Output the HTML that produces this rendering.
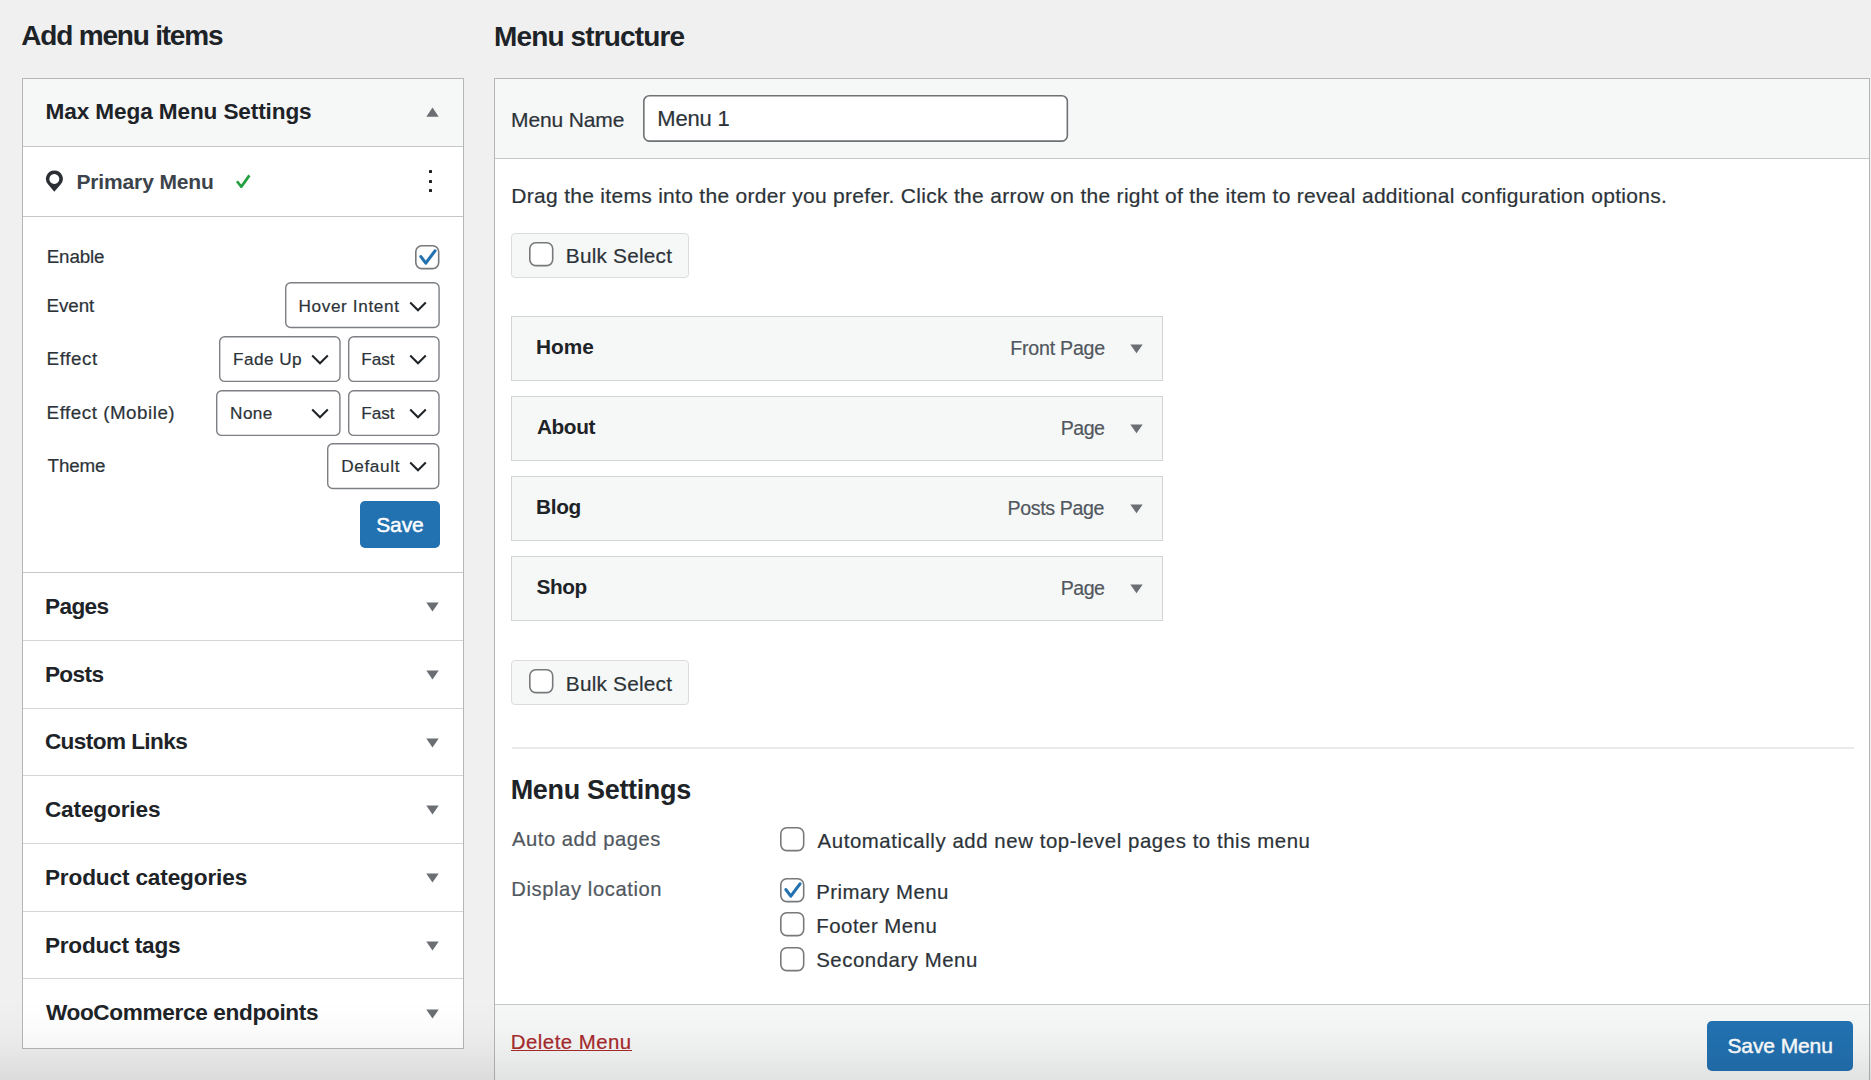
<!DOCTYPE html>
<html><head><meta charset="utf-8"><style>
html,body{margin:0;padding:0;}
body{width:1871px;height:1080px;overflow:hidden;position:relative;background:#f0f0f1;font-family:"Liberation Sans",sans-serif;}
div{white-space:pre;}
</style></head><body>
<div style="position:absolute;left:22.00px;top:78.00px;width:441.50px;height:970.50px;box-sizing:border-box;background:#fff;border:1px solid #b4b6b9;"></div>
<div style="position:absolute;left:23.00px;top:79.00px;width:439.50px;height:67.00px;box-sizing:border-box;background:#f6f7f7;"></div>
<div style="position:absolute;left:23.00px;top:145.50px;width:439.50px;height:1.00px;box-sizing:border-box;background:#c6c7c9;"></div>
<div style="position:absolute;left:23.00px;top:216.00px;width:439.50px;height:1.00px;box-sizing:border-box;background:#c6c7c9;"></div>
<div style="position:absolute;left:23.00px;top:572.20px;width:439.50px;height:1.00px;box-sizing:border-box;background:#c6c7c9;"></div>
<div style="position:absolute;left:23.00px;top:639.90px;width:439.50px;height:1.00px;box-sizing:border-box;background:#d4d5d7;"></div>
<div style="position:absolute;left:23.00px;top:707.60px;width:439.50px;height:1.00px;box-sizing:border-box;background:#d4d5d7;"></div>
<div style="position:absolute;left:23.00px;top:775.30px;width:439.50px;height:1.00px;box-sizing:border-box;background:#d4d5d7;"></div>
<div style="position:absolute;left:23.00px;top:843.00px;width:439.50px;height:1.00px;box-sizing:border-box;background:#d4d5d7;"></div>
<div style="position:absolute;left:23.00px;top:910.70px;width:439.50px;height:1.00px;box-sizing:border-box;background:#d4d5d7;"></div>
<div style="position:absolute;left:23.00px;top:978.40px;width:439.50px;height:1.00px;box-sizing:border-box;background:#d4d5d7;"></div>
<svg style="position:absolute;left:426.00px;top:107.00px" width="13" height="10" viewBox="0 0 13 10"><polygon points="0.3,9.7 12.7,9.7 6.5,0.5" fill="#6b6e72"/></svg>
<svg style="position:absolute;left:426.00px;top:602.30px" width="13" height="10" viewBox="0 0 13 10"><polygon points="0.3,0.5 12.7,0.5 6.5,9.5" fill="#6b6e72"/></svg>
<svg style="position:absolute;left:426.00px;top:670.00px" width="13" height="10" viewBox="0 0 13 10"><polygon points="0.3,0.5 12.7,0.5 6.5,9.5" fill="#6b6e72"/></svg>
<svg style="position:absolute;left:426.00px;top:737.70px" width="13" height="10" viewBox="0 0 13 10"><polygon points="0.3,0.5 12.7,0.5 6.5,9.5" fill="#6b6e72"/></svg>
<svg style="position:absolute;left:426.00px;top:805.40px" width="13" height="10" viewBox="0 0 13 10"><polygon points="0.3,0.5 12.7,0.5 6.5,9.5" fill="#6b6e72"/></svg>
<svg style="position:absolute;left:426.00px;top:873.10px" width="13" height="10" viewBox="0 0 13 10"><polygon points="0.3,0.5 12.7,0.5 6.5,9.5" fill="#6b6e72"/></svg>
<svg style="position:absolute;left:426.00px;top:940.80px" width="13" height="10" viewBox="0 0 13 10"><polygon points="0.3,0.5 12.7,0.5 6.5,9.5" fill="#6b6e72"/></svg>
<svg style="position:absolute;left:426.00px;top:1008.50px" width="13" height="10" viewBox="0 0 13 10"><polygon points="0.3,0.5 12.7,0.5 6.5,9.5" fill="#6b6e72"/></svg>
<svg style="position:absolute;left:45.00px;top:170.00px" width="19" height="23" viewBox="0 0 19 23"><path fill-rule="evenodd" d="M9.4 0.4A8.4 8.4 0 0 1 15.6 14.5L9.3 21.7L3.2 14.5A8.4 8.4 0 0 1 9.4 0.4ZM9.3 4.1A4.95 4.95 0 1 0 9.31 4.1Z" fill="#2b2f33"/></svg>
<svg style="position:absolute;left:234.00px;top:173.00px" width="18" height="17" viewBox="0 0 18 17"><path d="M3 8.2L7.3 13.8L15.4 2.4" fill="none" stroke="#22a040" stroke-width="2.7" stroke-linejoin="round"/></svg>
<div style="position:absolute;left:429.00px;top:170.20px;width:3.00px;height:3.00px;box-sizing:border-box;background:#1d2327;border-radius:0.5px;"></div>
<div style="position:absolute;left:429.00px;top:179.70px;width:3.00px;height:3.00px;box-sizing:border-box;background:#1d2327;border-radius:0.5px;"></div>
<div style="position:absolute;left:429.00px;top:189.00px;width:3.00px;height:3.00px;box-sizing:border-box;background:#1d2327;border-radius:0.5px;"></div>
<svg style="position:absolute;left:414.40px;top:243.80px" width="26.5" height="26.4" viewBox="0 0 26.5 26.4"><rect x="1.80" y="1.80" width="22.90" height="22.80" rx="6" fill="#fff" stroke="#77797c" stroke-width="1.6"/></svg>
<svg style="position:absolute;left:415.40px;top:244.80px" width="24" height="24" viewBox="0 0 24 24"><path d="M5.9 11.6L10.8 18.2L20 5.8" fill="none" stroke="#2271b1" stroke-width="3.1" stroke-linecap="round" stroke-linejoin="round"/></svg>
<svg style="position:absolute;left:284.00px;top:281.40px" width="156.8" height="48.2" viewBox="0 0 156.8 48.2"><rect x="1.70" y="1.70" width="153.40" height="44.80" rx="5" fill="#fff" stroke="#7c7f83" stroke-width="1.4"/></svg>
<svg style="position:absolute;left:409.20px;top:299.50px" width="18" height="12" viewBox="0 0 18 12"><path d="M1.2 2.5l7.8 7.8 7.8-7.8" fill="none" stroke="#1d2327" stroke-width="2"/></svg>
<svg style="position:absolute;left:218.30px;top:335.30px" width="123.7" height="48.1" viewBox="0 0 123.7 48.1"><rect x="1.70" y="1.70" width="120.30" height="44.70" rx="5" fill="#fff" stroke="#7c7f83" stroke-width="1.4"/></svg>
<svg style="position:absolute;left:310.80px;top:353.35px" width="18" height="12" viewBox="0 0 18 12"><path d="M1.2 2.5l7.8 7.8 7.8-7.8" fill="none" stroke="#1d2327" stroke-width="2"/></svg>
<svg style="position:absolute;left:346.80px;top:335.30px" width="93.7" height="48.1" viewBox="0 0 93.7 48.1"><rect x="1.70" y="1.70" width="90.30" height="44.70" rx="5" fill="#fff" stroke="#7c7f83" stroke-width="1.4"/></svg>
<svg style="position:absolute;left:409.20px;top:353.35px" width="18" height="12" viewBox="0 0 18 12"><path d="M1.2 2.5l7.8 7.8 7.8-7.8" fill="none" stroke="#1d2327" stroke-width="2"/></svg>
<svg style="position:absolute;left:215.40px;top:388.90px" width="126.6" height="48.1" viewBox="0 0 126.6 48.1"><rect x="1.70" y="1.70" width="123.20" height="44.70" rx="5" fill="#fff" stroke="#7c7f83" stroke-width="1.4"/></svg>
<svg style="position:absolute;left:310.80px;top:406.95px" width="18" height="12" viewBox="0 0 18 12"><path d="M1.2 2.5l7.8 7.8 7.8-7.8" fill="none" stroke="#1d2327" stroke-width="2"/></svg>
<svg style="position:absolute;left:346.80px;top:388.90px" width="93.7" height="48.1" viewBox="0 0 93.7 48.1"><rect x="1.70" y="1.70" width="90.30" height="44.70" rx="5" fill="#fff" stroke="#7c7f83" stroke-width="1.4"/></svg>
<svg style="position:absolute;left:409.20px;top:406.95px" width="18" height="12" viewBox="0 0 18 12"><path d="M1.2 2.5l7.8 7.8 7.8-7.8" fill="none" stroke="#1d2327" stroke-width="2"/></svg>
<svg style="position:absolute;left:326.30px;top:442.20px" width="114.5" height="48.2" viewBox="0 0 114.5 48.2"><rect x="1.70" y="1.70" width="111.10" height="44.80" rx="5" fill="#fff" stroke="#7c7f83" stroke-width="1.4"/></svg>
<svg style="position:absolute;left:409.20px;top:460.30px" width="18" height="12" viewBox="0 0 18 12"><path d="M1.2 2.5l7.8 7.8 7.8-7.8" fill="none" stroke="#1d2327" stroke-width="2"/></svg>
<div style="position:absolute;left:360.00px;top:501.00px;width:80.00px;height:46.80px;box-sizing:border-box;background:#2271b1;border-radius:5px;"></div>
<div style="position:absolute;left:494.00px;top:78.00px;width:1376.00px;height:1022.00px;box-sizing:border-box;background:#fff;border:1px solid #b4b6b9;"></div>
<div style="position:absolute;left:495.00px;top:79.00px;width:1374.00px;height:79.00px;box-sizing:border-box;background:#f6f7f7;"></div>
<div style="position:absolute;left:495.00px;top:157.60px;width:1374.00px;height:1.00px;box-sizing:border-box;background:#c6c7c9;"></div>
<div style="position:absolute;left:495.00px;top:1003.50px;width:1374.00px;height:96.50px;box-sizing:border-box;background:#f6f7f7;border-top:1px solid #c6c7c9;"></div>
<svg style="position:absolute;left:642.00px;top:94.00px" width="427.2" height="48.9" viewBox="0 0 427.2 48.9"><rect x="1.80" y="1.80" width="423.60" height="45.30" rx="5.5" fill="#fff" stroke="#6f7275" stroke-width="1.6"/></svg>
<div style="position:absolute;left:511.30px;top:232.50px;width:177.90px;height:45.70px;box-sizing:border-box;background:#f6f7f7;border:1px solid #dcdcde;border-radius:4px;"></div>
<svg style="position:absolute;left:527.80px;top:241.15px" width="26.5" height="26.4" viewBox="0 0 26.5 26.4"><rect x="1.80" y="1.80" width="22.90" height="22.80" rx="6" fill="#fff" stroke="#77797c" stroke-width="1.6"/></svg>
<div style="position:absolute;left:511.30px;top:659.70px;width:177.90px;height:45.80px;box-sizing:border-box;background:#f6f7f7;border:1px solid #dcdcde;border-radius:4px;"></div>
<svg style="position:absolute;left:527.80px;top:668.40px" width="26.5" height="26.4" viewBox="0 0 26.5 26.4"><rect x="1.80" y="1.80" width="22.90" height="22.80" rx="6" fill="#fff" stroke="#77797c" stroke-width="1.6"/></svg>
<div style="position:absolute;left:511.30px;top:315.70px;width:651.70px;height:65.00px;box-sizing:border-box;background:#f6f7f7;border:1px solid #d3d4d6;"></div>
<svg style="position:absolute;left:1129.70px;top:343.70px" width="13" height="10" viewBox="0 0 13 10"><polygon points="0.3,0.5 12.7,0.5 6.5,9.2" fill="#6b6e72"/></svg>
<div style="position:absolute;left:511.30px;top:395.70px;width:651.70px;height:65.00px;box-sizing:border-box;background:#f6f7f7;border:1px solid #d3d4d6;"></div>
<svg style="position:absolute;left:1129.70px;top:423.70px" width="13" height="10" viewBox="0 0 13 10"><polygon points="0.3,0.5 12.7,0.5 6.5,9.2" fill="#6b6e72"/></svg>
<div style="position:absolute;left:511.30px;top:475.70px;width:651.70px;height:65.00px;box-sizing:border-box;background:#f6f7f7;border:1px solid #d3d4d6;"></div>
<svg style="position:absolute;left:1129.70px;top:503.70px" width="13" height="10" viewBox="0 0 13 10"><polygon points="0.3,0.5 12.7,0.5 6.5,9.2" fill="#6b6e72"/></svg>
<div style="position:absolute;left:511.30px;top:555.70px;width:651.70px;height:65.00px;box-sizing:border-box;background:#f6f7f7;border:1px solid #d3d4d6;"></div>
<svg style="position:absolute;left:1129.70px;top:583.70px" width="13" height="10" viewBox="0 0 13 10"><polygon points="0.3,0.5 12.7,0.5 6.5,9.2" fill="#6b6e72"/></svg>
<div style="position:absolute;left:511.80px;top:747.30px;width:1342.20px;height:1.50px;box-sizing:border-box;background:#eaeaeb;"></div>
<svg style="position:absolute;left:779.20px;top:826.30px" width="26.5" height="26.4" viewBox="0 0 26.5 26.4"><rect x="1.80" y="1.80" width="22.90" height="22.80" rx="6" fill="#fff" stroke="#77797c" stroke-width="1.6"/></svg>
<svg style="position:absolute;left:779.20px;top:877.10px" width="26.5" height="26.4" viewBox="0 0 26.5 26.4"><rect x="1.80" y="1.80" width="22.90" height="22.80" rx="6" fill="#fff" stroke="#77797c" stroke-width="1.6"/></svg>
<svg style="position:absolute;left:780.20px;top:878.10px" width="24" height="24" viewBox="0 0 24 24"><path d="M5.9 11.6L10.8 18.2L20 5.8" fill="none" stroke="#2271b1" stroke-width="3.1" stroke-linecap="round" stroke-linejoin="round"/></svg>
<svg style="position:absolute;left:779.20px;top:911.40px" width="26.5" height="26.4" viewBox="0 0 26.5 26.4"><rect x="1.80" y="1.80" width="22.90" height="22.80" rx="6" fill="#fff" stroke="#77797c" stroke-width="1.6"/></svg>
<svg style="position:absolute;left:779.20px;top:946.30px" width="26.5" height="26.4" viewBox="0 0 26.5 26.4"><rect x="1.80" y="1.80" width="22.90" height="22.80" rx="6" fill="#fff" stroke="#77797c" stroke-width="1.6"/></svg>
<div style="position:absolute;left:1707.20px;top:1020.80px;width:145.80px;height:49.80px;box-sizing:border-box;background:#2271b1;border-radius:5px;"></div>
<div style="position:absolute;left:21.30px;top:21.90px;font-size:28.0px;line-height:28.0px;font-weight:700;letter-spacing:-1.200px;color:#1d2327;">Add menu items</div>
<div style="position:absolute;left:494.00px;top:22.86px;font-size:28.0px;line-height:28.0px;font-weight:700;letter-spacing:-0.862px;color:#1d2327;">Menu structure</div>
<div style="position:absolute;left:45.60px;top:101.41px;font-size:22.6px;line-height:22.6px;font-weight:700;letter-spacing:-0.124px;color:#1d2327;">Max Mega Menu Settings</div>
<div style="position:absolute;left:76.40px;top:171.32px;font-size:21.0px;line-height:21.0px;font-weight:700;letter-spacing:-0.127px;color:#3c434a;">Primary Menu</div>
<div style="position:absolute;left:46.70px;top:248.03px;font-size:18.8px;line-height:18.8px;font-weight:400;letter-spacing:-0.140px;color:#2c3338;-webkit-text-stroke:0.2px #2c3338;">Enable</div>
<div style="position:absolute;left:46.60px;top:297.33px;font-size:18.8px;line-height:18.8px;font-weight:400;letter-spacing:-0.075px;color:#2c3338;-webkit-text-stroke:0.2px #2c3338;">Event</div>
<div style="position:absolute;left:46.60px;top:350.33px;font-size:18.8px;line-height:18.8px;font-weight:400;letter-spacing:0.600px;color:#2c3338;-webkit-text-stroke:0.2px #2c3338;">Effect</div>
<div style="position:absolute;left:46.60px;top:403.59px;font-size:18.8px;line-height:18.8px;font-weight:400;letter-spacing:0.521px;color:#2c3338;-webkit-text-stroke:0.2px #2c3338;">Effect (Mobile)</div>
<div style="position:absolute;left:47.60px;top:456.89px;font-size:18.8px;line-height:18.8px;font-weight:400;letter-spacing:-0.150px;color:#2c3338;-webkit-text-stroke:0.2px #2c3338;">Theme</div>
<div style="position:absolute;left:298.50px;top:298.40px;font-size:17.2px;line-height:17.2px;font-weight:400;letter-spacing:0.618px;color:#2c3338;-webkit-text-stroke:0.2px #2c3338;">Hover Intent</div>
<div style="position:absolute;left:233.00px;top:350.54px;font-size:17.2px;line-height:17.2px;font-weight:400;letter-spacing:0.450px;color:#2c3338;-webkit-text-stroke:0.2px #2c3338;">Fade Up</div>
<div style="position:absolute;left:361.30px;top:350.54px;font-size:17.2px;line-height:17.2px;font-weight:400;letter-spacing:-0.100px;color:#2c3338;-webkit-text-stroke:0.2px #2c3338;">Fast</div>
<div style="position:absolute;left:230.10px;top:404.64px;font-size:17.2px;line-height:17.2px;font-weight:400;letter-spacing:0.400px;color:#2c3338;-webkit-text-stroke:0.2px #2c3338;">None</div>
<div style="position:absolute;left:361.30px;top:404.64px;font-size:17.2px;line-height:17.2px;font-weight:400;letter-spacing:-0.100px;color:#2c3338;-webkit-text-stroke:0.2px #2c3338;">Fast</div>
<div style="position:absolute;left:341.20px;top:458.44px;font-size:17.2px;line-height:17.2px;font-weight:400;letter-spacing:0.633px;color:#2c3338;-webkit-text-stroke:0.2px #2c3338;">Default</div>
<div style="position:absolute;left:376.24px;top:513.88px;font-size:21.0px;line-height:21.0px;font-weight:400;letter-spacing:-0.133px;color:#ffffff;-webkit-text-stroke:0.45px #ffffff;">Save</div>
<div style="position:absolute;left:511.10px;top:109.22px;font-size:21.0px;line-height:21.0px;font-weight:400;letter-spacing:-0.138px;color:#2c3338;-webkit-text-stroke:0.2px #2c3338;">Menu Name</div>
<div style="position:absolute;left:657.36px;top:108.06px;font-size:22.0px;line-height:22.0px;font-weight:400;letter-spacing:-0.220px;color:#2c3338;-webkit-text-stroke:0.2px #2c3338;">Menu 1</div>
<div style="position:absolute;left:511.30px;top:185.04px;font-size:21.0px;line-height:21.0px;font-weight:400;letter-spacing:0.298px;color:#2c3338;-webkit-text-stroke:0.2px #2c3338;">Drag the items into the order you prefer. Click the arrow on the right of the item to reveal additional configuration options.</div>
<div style="position:absolute;left:565.80px;top:246.25px;font-size:20.8px;line-height:20.8px;font-weight:400;letter-spacing:0.210px;color:#2c3338;-webkit-text-stroke:0.2px #2c3338;">Bulk Select</div>
<div style="position:absolute;left:565.80px;top:673.83px;font-size:20.8px;line-height:20.8px;font-weight:400;letter-spacing:0.210px;color:#2c3338;-webkit-text-stroke:0.2px #2c3338;">Bulk Select</div>
<div style="position:absolute;left:536.10px;top:336.59px;font-size:20.8px;line-height:20.8px;font-weight:700;letter-spacing:0.000px;color:#1d2327;">Home</div>
<div style="position:absolute;left:537.00px;top:416.59px;font-size:20.8px;line-height:20.8px;font-weight:700;letter-spacing:-0.425px;color:#1d2327;">About</div>
<div style="position:absolute;left:536.10px;top:496.59px;font-size:20.8px;line-height:20.8px;font-weight:700;letter-spacing:-0.333px;color:#1d2327;">Blog</div>
<div style="position:absolute;left:536.50px;top:576.59px;font-size:20.8px;line-height:20.8px;font-weight:700;letter-spacing:-0.400px;color:#1d2327;">Shop</div>
<div style="position:absolute;left:1010.30px;top:338.55px;font-size:19.6px;line-height:19.6px;font-weight:400;letter-spacing:-0.233px;color:#50575e;-webkit-text-stroke:0.2px #50575e;">Front Page</div>
<div style="position:absolute;left:1060.80px;top:418.55px;font-size:19.6px;line-height:19.6px;font-weight:400;letter-spacing:-0.533px;color:#50575e;-webkit-text-stroke:0.2px #50575e;">Page</div>
<div style="position:absolute;left:1007.60px;top:498.55px;font-size:19.6px;line-height:19.6px;font-weight:400;letter-spacing:-0.378px;color:#50575e;-webkit-text-stroke:0.2px #50575e;">Posts Page</div>
<div style="position:absolute;left:1060.80px;top:578.55px;font-size:19.6px;line-height:19.6px;font-weight:400;letter-spacing:-0.533px;color:#50575e;-webkit-text-stroke:0.2px #50575e;">Page</div>
<div style="position:absolute;left:510.70px;top:777.18px;font-size:27.0px;line-height:27.0px;font-weight:700;letter-spacing:-0.333px;color:#1d2327;">Menu Settings</div>
<div style="position:absolute;left:512.00px;top:829.36px;font-size:20.2px;line-height:20.2px;font-weight:400;letter-spacing:0.538px;color:#50575e;-webkit-text-stroke:0.2px #50575e;">Auto add pages</div>
<div style="position:absolute;left:511.32px;top:879.44px;font-size:20.2px;line-height:20.2px;font-weight:400;letter-spacing:0.587px;color:#50575e;-webkit-text-stroke:0.2px #50575e;">Display location</div>
<div style="position:absolute;left:817.60px;top:830.73px;font-size:20.4px;line-height:20.4px;font-weight:400;letter-spacing:0.563px;color:#2c3338;-webkit-text-stroke:0.2px #2c3338;">Automatically add new top-level pages to this menu</div>
<div style="position:absolute;left:816.20px;top:881.53px;font-size:20.4px;line-height:20.4px;font-weight:400;letter-spacing:0.482px;color:#2c3338;-webkit-text-stroke:0.2px #2c3338;">Primary Menu</div>
<div style="position:absolute;left:816.36px;top:915.73px;font-size:20.4px;line-height:20.4px;font-weight:400;letter-spacing:0.480px;color:#2c3338;-webkit-text-stroke:0.2px #2c3338;">Footer Menu</div>
<div style="position:absolute;left:816.20px;top:950.03px;font-size:20.4px;line-height:20.4px;font-weight:400;letter-spacing:0.531px;color:#2c3338;-webkit-text-stroke:0.2px #2c3338;">Secondary Menu</div>
<div style="position:absolute;left:510.80px;top:1031.73px;font-size:20.4px;line-height:20.4px;font-weight:400;letter-spacing:0.480px;color:#a8292b;-webkit-text-stroke:0.2px #a8292b;">Delete Menu</div>
<div style="position:absolute;left:1727.44px;top:1035.40px;font-size:21.0px;line-height:21.0px;font-weight:400;letter-spacing:-0.100px;color:#ffffff;-webkit-text-stroke:0.45px #ffffff;">Save Menu</div>
<div style="position:absolute;left:44.90px;top:596.29px;font-size:22.6px;line-height:22.6px;font-weight:700;letter-spacing:-0.575px;color:#1d2327;">Pages</div>
<div style="position:absolute;left:44.90px;top:663.75px;font-size:22.6px;line-height:22.6px;font-weight:700;letter-spacing:-0.600px;color:#1d2327;">Posts</div>
<div style="position:absolute;left:44.90px;top:731.29px;font-size:22.6px;line-height:22.6px;font-weight:700;letter-spacing:-0.591px;color:#1d2327;">Custom Links</div>
<div style="position:absolute;left:44.90px;top:799.47px;font-size:22.6px;line-height:22.6px;font-weight:700;letter-spacing:-0.133px;color:#1d2327;">Categories</div>
<div style="position:absolute;left:44.90px;top:866.93px;font-size:22.6px;line-height:22.6px;font-weight:700;letter-spacing:-0.135px;color:#1d2327;">Product categories</div>
<div style="position:absolute;left:44.90px;top:934.63px;font-size:22.6px;line-height:22.6px;font-weight:700;letter-spacing:-0.218px;color:#1d2327;">Product tags</div>
<div style="position:absolute;left:45.90px;top:1002.41px;font-size:22.6px;line-height:22.6px;font-weight:700;letter-spacing:-0.345px;color:#1d2327;">WooCommerce endpoints</div>
<div style="position:absolute;left:511.20px;top:1050.00px;width:120.70px;height:1.00px;box-sizing:border-box;background:#a8292b;"></div>
<div style="position:absolute;left:0;top:1000px;width:1871px;height:80px;background:linear-gradient(to bottom,rgba(0,0,0,0) 0%,rgba(0,0,0,0.01) 30%,rgba(0,0,0,0.035) 60%,rgba(0,0,0,0.085) 100%);"></div>
</body></html>
